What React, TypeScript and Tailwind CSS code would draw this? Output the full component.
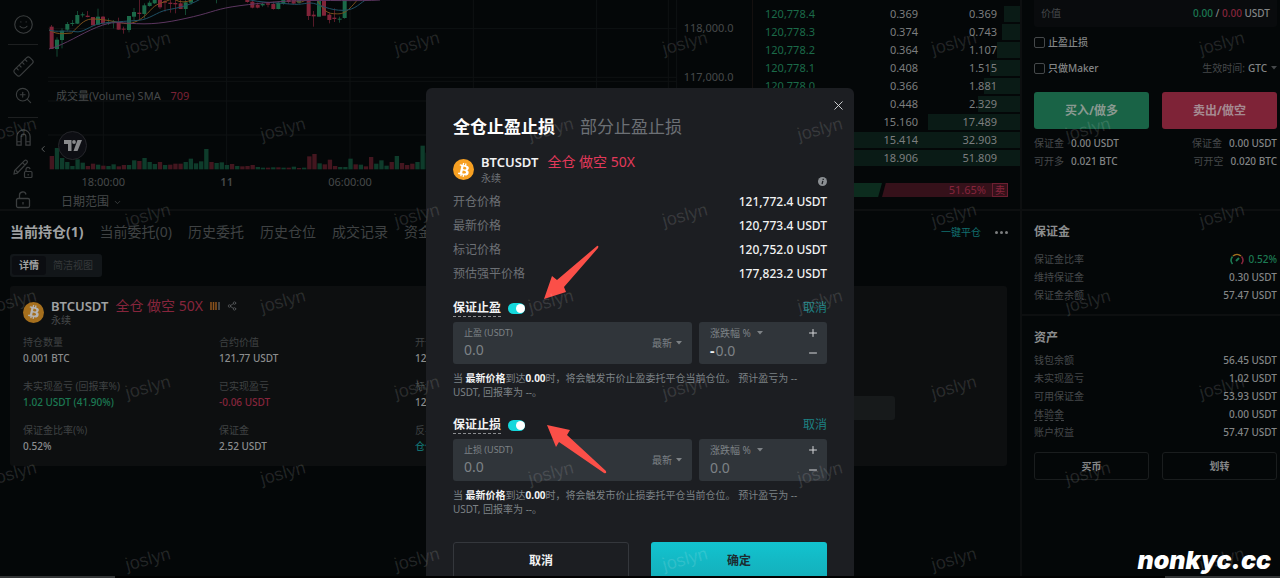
import * as React from "react"
import { ChevronDown, ChevronLeft, Minus, Plus, Ruler, Share2, Smile, X, ZoomIn } from "lucide-react"
import { FaBtc } from "react-icons/fa"

// chart units are thirds of a pixel: [x, open/close top, bottom, high, low, up]
const candles: [number, number, number, number, number, number][] = [
  [155, 80, 147, 75, 147, 0], [171, 119, 147, 112, 170, 1], [186, 92, 120, 85, 145, 1], [202, 72, 89, 66, 92, 1],
  [217, 69, 72, 60, 78, 1], [232, 45, 71, 33, 72, 1], [248, 43, 46, 37, 52, 1], [263, 47, 51, 33, 52, 0],
  [279, 51, 76, 51, 76, 0], [294, 50, 74, 26, 74, 1], [309, 50, 70, 48, 75, 0], [325, 66, 70, 55, 75, 1],
  [341, 64, 67, 60, 85, 1], [356, 66, 89, 53, 89, 0], [371, 86, 89, 80, 101, 0], [387, 48, 90, 48, 97, 1],
  [402, 36, 50, 24, 65, 1], [418, 38, 42, 0, 58, 0], [433, 16, 42, 10, 55, 1], [449, 8, 18, 2, 20, 1],
  [464, -10, 10, -10, 12, 1], [480, -4, 22, -5, 27, 0], [495, 4, 8, 0, 35, 0], [511, 8, 12, 0, 38, 0],
  [526, 9, 13, 0, 40, 0], [542, 10, 27, 0, 27, 0], [557, 7, 27, 0, 45, 1], [573, -10, 8, -10, 14, 1],
  [650, -10, 0, -10, 10, 1], [742, -5, 6, -5, 8, 0], [757, 5, 23, 0, 25, 0], [773, 14, 23, 8, 25, 0],
  [788, 12, 16, 8, 20, 1], [804, 10, 14, 5, 22, 0], [820, 12, 27, 5, 29, 0], [835, 8, 27, 5, 28, 1],
  [850, 0, 10, -5, 14, 1], [866, -3, 6, -5, 12, 0], [881, 0, 11, -5, 12, 0], [897, -3, 8, -5, 12, 1],
  [926, -5, 48, -5, 60, 0], [941, 44, 49, 33, 80, 0], [957, -5, 50, -5, 50, 1], [972, -5, 47, -5, 47, 0],
  [988, 44, 60, 40, 70, 0], [1003, 53, 57, 25, 66, 0], [1019, 56, 59, 50, 68, 1], [1034, -5, 54, -5, 56, 1],
]

// positive = up bar, negative = down bar
const volumes = [
  -40, 64, 34, 22, 10, 30, 20, -10, -17, 14, -11, 10, 15, -9, -13, 13, 27, -25, 34, 22, 16, -22, 13, -14, -17, -17,
  22, 32, 18, 24, 61, -22, 19, 21, 13, -16, 10, -9, -10, -13, 7, 5, -5, 6, -6, 5, -5, 8, -4, 5, -39, -46, 18, -15,
  -29, -10, 7, 7, 32, -15, 14, -9, -37, 17, 27, 11, -22, 40, -19, -13, -17, 22, 71, 50,
]

const book = [
  { price: "120,778.4", amount: "0.369", total: "0.369", depth: 16 },
  { price: "120,778.3", amount: "0.374", total: "0.743", depth: 18 },
  { price: "120,778.2", amount: "0.364", total: "1.107", depth: 23 },
  { price: "120,778.1", amount: "0.408", total: "1.515", depth: 30 },
  { price: "120,778.0", amount: "0.366", total: "1.881", depth: 36 },
  { price: "120,777.9", amount: "0.448", total: "2.329", depth: 42 },
  { price: "120,777.8", amount: "15.160", total: "17.489", depth: 92 },
  { price: "120,777.7", amount: "15.414", total: "32.903", depth: 268 },
  { price: "120,777.6", amount: "18.906", total: "51.809", depth: 268 },
]

const position = [
  { label: "持仓数量", value: "0.001 BTC", color: "text-[#8b8d8e]" },
  { label: "合约价值", value: "121.77 USDT", color: "text-[#8b8d8e]" },
  { label: "开仓价格", value: "121,772.4 USDT", color: "text-[#8b8d8e]" },
  { label: "未实现盈亏 (回报率%)", value: "1.02 USDT (41.90%)", color: "text-[#1c7a53]" },
  { label: "已实现盈亏", value: "-0.06 USDT", color: "text-[#86253c]" },
  { label: "标记价格", value: "120,752.0 USDT", color: "text-[#8b8d8e]" },
  { label: "保证金比率(%)", value: "0.52%", color: "text-[#8b8d8e]" },
  { label: "保证金", value: "2.52 USDT", color: "text-[#8b8d8e]" },
  { label: "反手", value: "仓位反手", color: "text-[#12706f]" },
]

const prices = [
  { label: "开仓价格", value: "121,772.4 USDT" },
  { label: "最新价格", value: "120,773.4 USDT" },
  { label: "标记价格", value: "120,752.0 USDT" },
  { label: "预估强平价格", value: "177,823.2 USDT" },
]

function Caret({ className = "" }: { className?: string }) {
  return (
    <svg viewBox="0 0 6 4" className={`pointer-events-none h-1 w-1.5 fill-current ${className}`}>
      <path d="M0 0h6L3 3.6z" />
    </svg>
  )
}

function Coin({ className = "" }: { className?: string }) {
  return (
    <span className={`flex h-[21px] w-[21px] shrink-0 items-center justify-center rounded-full ${className}`}>
      <FaBtc className="h-3.5 w-3.5 rotate-12" />
    </span>
  )
}

function Toolbar() {
  const button = "flex h-5 items-center justify-center"
  return (
    <div className="relative flex w-[46px] shrink-0 flex-col items-stretch pt-3.5 text-[#3b3e3f]">
      <button aria-label="emoji" className={button}><Smile size={21} strokeWidth={1.3} /></button>
      <hr className="mx-2 mt-[10px] border-[#1d1f20]" />
      <button aria-label="ruler" className={`${button} mt-[11px]`}><Ruler size={23} strokeWidth={1.2} className="-scale-x-100" /></button>
      <button aria-label="zoom" className={`${button} mt-2.5`}><ZoomIn size={19} strokeWidth={1.4} /></button>
      <hr className="mx-2 mt-3 border-[#1d1f20]" />
      <button aria-label="magnet" className={`${button} mt-2.5`}>
        <svg viewBox="0 0 18 20" className="h-[19px] w-[17px]" fill="none" stroke="currentColor" strokeWidth="1.3">
          <path d="M2 18V9a7 7 0 0 1 14 0v9h-4.5V9a2.5 2.5 0 0 0-5 0v9zM2 14.5h4.5M11.5 14.5H16" />
        </svg>
      </button>
      <button aria-label="lock drawings" className={`${button} mt-3`}>
        <svg viewBox="0 0 20 20" className="h-5 w-5" fill="none" stroke="currentColor" strokeWidth="1.2">
          <path d="M1 15l.6-3.4L11.5 1.6a1.7 1.7 0 0 1 2.4 2.4L4.2 14.2zM9.5 3.6l2.5 2.5M3 11.5l1.5 1.5" />
          <rect x="11.5" y="12.5" width="7.5" height="6" rx="1" />
          <path d="M13 12.5v-2a2 2 0 0 1 4-.4M15.2 15v1.5" />
        </svg>
      </button>
      <button aria-label="lock" className={`${button} mt-3`}>
        <svg viewBox="0 0 16 18" className="h-[18px] w-4" fill="none" stroke="currentColor" strokeWidth="1.3">
          <rect x="1.5" y="7.5" width="13" height="9" rx="1.5" />
          <path d="M4.5 7.5V4.5a3.3 3.3 0 0 1 6.5-1M8 11v2.5" />
        </svg>
      </button>
      <button aria-label="collapse" className="absolute -right-0.5 top-36 text-[#6b6d6e]"><ChevronLeft size={10} /></button>
    </div>
  )
}

function Chart() {
  return (
    <div className="relative min-w-0 flex-1 overflow-hidden pl-0.5">
      <svg viewBox="144 0 2115 570" className="h-[190px] w-[705px] max-w-none">
        <g stroke="#0f1213" strokeWidth="3">
          {[86, 232, 244, 303, 405].map((y) => <path key={y} d={`M144 ${y}H2030`} />)}
          {[310, 680, 1050, 1420, 1790, 2005, 2030].map((x) => <path key={x} d={`M${x} 0V508`} />)}
        </g>
        {candles.map(([x, top, bottom, high, low, up]) => (
          <g key={x} fill={up ? "#1b6a49" : "#802439"}>
            <rect x={x - 6} y={top} width="12" height={bottom - top} />
            <rect x={x - 1} y={high} width="2" height={low - high} />
          </g>
        ))}
        {volumes.map((v, i) => (
          <rect
            key={i}
            x={149 + i * 15.45}
            y={508 - Math.abs(v)}
            width="13"
            height={Math.abs(v)}
            fill={v > 0 ? "#0e3c2b" : "#44161f"}
          />
        ))}
        <g fill="none" strokeWidth="3">
          <path stroke="#7a4f1c" d="M147 90C160 98 175 102 190 101L215 99C235 80 250 58 275 57S340 64 370 70S430 55 450 32S480 12 512 -2M525 -1Q548 12 575 0M885 0C895 10 905 8 920 -2M950 -2C965 20 975 40 1000 41S1035 46 1075 -4" />
          <path stroke="#1f5064" d="M147 90C170 98 200 90 225 95S270 76 300 71S380 64 415 61S470 36 500 30S560 20 600 -2M740 -2C780 8 830 8 870 12S920 6 940 10S990 32 1030 31S1080 6 1102 -2" />
          <path stroke="#5c3660" d="M147 147C200 132 240 102 290 82S350 68 410 71S520 64 580 50S650 26 720 17S830 4 900 2S1080 4 1140 0" />
        </g>
        <g fill="#46494a" fontSize="33" fontFamily="Noto Sans, sans-serif">
          <text x="2051" y="95">118,000.0</text>
          <text x="2051" y="243">117,000.0</text>
          <g textAnchor="middle">
            <text x="310" y="558">18:00:00</text>
            <text x="680" y="558" fontWeight="600">11</text>
            <text x="1050" y="558">06:00:00</text>
          </g>
        </g>
      </svg>
      <p className="absolute left-2.5 top-[88px] text-[11px] leading-4 text-[#46494a]">
        成交量(Volume) SMA <span className="ml-[7px] text-[#7a2236]">709</span>
      </p>
      <span className="absolute left-3 top-[131px] flex h-[29px] w-[29px] items-center justify-center rounded-full border border-[#25262a] bg-[#0d0e13]">
        <svg viewBox="0 0 18 11" className="h-[11px] w-[18px] fill-[#88898b]">
          <path d="M0 0h7.5v11H4V4H0z" />
          <circle cx="10" cy="2" r="1.9" />
          <path d="M13.5 0H18l-4.5 11H9.5z" />
        </svg>
      </span>
      <button className="ml-[13px] mt-0.5 flex h-5 items-center gap-1 text-xs text-[#46494a]">
        日期范围 <ChevronDown size={9} />
      </button>
    </div>
  )
}

function OrderBook() {
  return (
    <div className="flex w-[268px] shrink-0 flex-col border-l border-[#14100f] pt-[5px]">
      {book.map((row) => (
        <div key={row.price} className="relative flex h-[18px] items-center pl-3 pr-[23px] text-[11px]">
          <span className="absolute bottom-px right-0 top-px bg-[#0a1b16]" style={{ width: row.depth }} />
          <span className="relative w-[70px] text-[#1b6a49]">{row.price}</span>
          <span className="relative flex-1 text-right text-[#7c7e7f]">{row.amount}</span>
          <span className="relative w-[79px] text-right text-[#7c7e7f]">{row.total}</span>
        </div>
      ))}
      <div className="mr-3 mt-4 flex h-3.5 text-[11px] leading-[14px]">
        <span className="flex-1 bg-[#0c2c1e] [clip-path:polygon(0_0,100%_0,97%_100%,0_100%)]" />
        <span className="flex w-[126px] items-center justify-end gap-1.5 bg-[#35111a] text-[#86253c] [clip-path:polygon(3%_0,100%_0,100%_100%,0_100%)]">
          51.65%
          <span className="flex h-3.5 w-4 items-center justify-center border border-[#6d1f31] text-[10px]">卖</span>
        </span>
      </div>
    </div>
  )
}

function Positions() {
  return (
    <section className="px-2.5 pt-[9px]">
      <div className="flex items-center pr-0.5">
        <nav className="flex flex-1 gap-4 whitespace-nowrap text-sm leading-6 text-[#3f4243]">
          <button className="font-bold text-[#a0a2a3]">当前持仓(1)</button>
          <button>当前委托(0)</button>
          <button>历史委托</button>
          <button>历史仓位</button>
          <button>成交记录</button>
          <button>资金流水</button>
        </nav>
        <button className="mr-3.5 text-[10px] text-[#12706f]">一键平仓</button>
        <button aria-label="more" className="flex gap-0.5">
          <i className="h-[3px] w-[3px] rounded-full bg-[#7c7e7f]" />
          <i className="h-[3px] w-[3px] rounded-full bg-[#7c7e7f]" />
          <i className="h-[3px] w-[3px] rounded-full bg-[#7c7e7f]" />
        </button>
      </div>
      <div className="mt-2.5 flex w-[92px] items-center rounded-[3px] bg-[#121619] p-0.5 text-[10px] leading-[19px]">
        <button className="w-[34px] rounded-[3px] bg-[#0b0d11] font-bold text-[#a0a2a3]">详情</button>
        <button className="flex-1 text-[#35383a]">简洁视图</button>
      </div>
      <div className="mr-[3px] mt-[9px] rounded-[3px] bg-[#0d0f10] pb-3 pl-[13px] pr-1 pt-3">
        <div className="flex items-center gap-[7px]">
          <Coin className="bg-[#a56f1d] text-[#b5b5b5]" />
          <div>
            <p className="flex items-center gap-[7px] text-[13px] leading-4">
              <b className="font-semibold text-[#a0a2a3]">BTCUSDT</b>
              <span className="text-sm leading-4 text-[#86253c]">全仓 做空 50X</span>
              <svg viewBox="0 0 10 8" className="h-2 w-2.5">
                <path d="M1 0v8M3.5 0v8M6 0v8" stroke="#8f541c" strokeWidth="1.5" />
                <path d="M9 0v8" stroke="#55585a" strokeWidth="1.5" />
              </svg>
              <Share2 size={10} className="text-[#55585a]" />
            </p>
            <p className="text-[10px] leading-3 text-[#46494a]">永续</p>
          </div>
        </div>
        <div className="relative mt-2 grid grid-cols-5 gap-y-3 text-[10px] leading-4">
          {position.map((item, i) => (
            <div key={item.label} className={i % 3 === 2 ? "col-span-3" : ""}>
              <p className="text-[#3f4243]">{item.label}</p>
              <p className={`font-medium ${item.color}`}>{item.value}</p>
            </div>
          ))}
          <button aria-label="close position" className="absolute left-[80%] top-[62px] h-6 w-[88px] rounded-[3px] bg-[#171a1b]" />
        </div>
      </div>
    </section>
  )
}

function Row({ label, value, dashed }: { label: string; value: React.ReactNode; dashed?: boolean }) {
  return (
    <div className="flex h-[18px] items-center justify-between">
      <span className={dashed ? "border-b border-dashed border-[#45484a] leading-3 text-[#45484a]" : "text-[#45484a]"}>{label}</span>
      <span className="font-medium text-[#838586]">{value}</span>
    </div>
  )
}

function Sidebar() {
  const box = "h-[11px] w-[11px] appearance-none rounded-[2px] border border-[#45484a]"
  return (
    <aside className="w-[260px] shrink-0 border-l-2 border-[#0d0f10] text-[10px]">
      <section className="h-[211px] border-b-2 border-[#0d0f10] pl-3 pr-[3px]">
        <div className="flex h-[27px] items-center justify-between rounded-b-[3px] bg-[#090b0d] px-[7px]">
          <span className="text-[#45484a]">价值</span>
          <span className="font-medium text-[#838586]">
            <span className="text-[#1c7a53]">0.00</span> / <span className="text-[#86253c]">0.00</span> USDT
          </span>
        </div>
        <label className="mt-[7px] flex h-4 items-center gap-[3px] font-medium text-[#838586]">
          <input type="checkbox" className={box} />
          止盈止损
        </label>
        <div className="mt-2.5 flex h-4 items-center justify-between">
          <label className="flex items-center gap-[3px] font-medium text-[#838586]">
            <input type="checkbox" className={box} />
            只做Maker
          </label>
          <label className="flex items-center gap-[3px] text-[#45484a]">
            生效时间:
            <select className="appearance-none font-medium text-[#838586]">
              <option>GTC</option>
            </select>
            <Caret />
          </label>
        </div>
        <div className="mt-4 grid grid-cols-2 gap-[13px] text-xs font-bold">
          <button className="h-[37px] rounded-[3px] bg-[#196346] text-[#8a9991]">买入/做多</button>
          <button className="h-[37px] rounded-[3px] bg-[#7e2337] text-[#a58a91]">卖出/做空</button>
        </div>
        <div className="mt-[5px] flex justify-between font-medium leading-[18px] text-[#838586]">
          <div>
            <p><span className="mr-[7px] font-normal text-[#45484a]">保证金</span>0.00 USDT</p>
            <p><span className="mr-[7px] font-normal text-[#45484a]">可开多</span>0.021 BTC</p>
          </div>
          <div className="text-right">
            <p><span className="mr-[7px] font-normal text-[#45484a]">保证金</span>0.00 USDT</p>
            <p><span className="mr-[7px] font-normal text-[#45484a]">可开空</span>0.020 BTC</p>
          </div>
        </div>
      </section>
      <section className="h-[105px] border-b-2 border-[#0d0f10] pl-3 pr-[3px] pt-[11px]">
        <h2 className="mb-2 text-xs font-bold leading-5 text-[#8b8d8e]">保证金</h2>
        <Row
          label="保证金比率"
          value={
            <span className="flex items-center gap-[5px] text-[#1c7a53]">
              <svg viewBox="0 0 14 12" className="h-3 w-3.5" fill="none" strokeWidth="1.6">
                <path d="M2.5 11A6 6 0 0 1 2.5 3.5" stroke="#1c7a53" />
                <path d="M3 3A6 6 0 0 1 11 3" stroke="#a0701e" />
                <path d="M11.5 3.5A6 6 0 0 1 11.5 11" stroke="#86253c" />
                <path d="M6 8l3-3" stroke="#1c7a53" strokeWidth="2" />
              </svg>
              0.52%
            </span>
          }
        />
        <Row label="维持保证金" value="0.30 USDT" />
        <Row label="保证金余额" value="57.47 USDT" />
      </section>
      <section className="pl-3 pr-[3px] pt-3">
        <h2 className="mb-[3px] text-xs font-bold leading-5 text-[#8b8d8e]">资产</h2>
        <Row label="钱包余额" value="56.45 USDT" />
        <Row label="未实现盈亏" value="1.02 USDT" />
        <Row label="可用保证金" value="53.93 USDT" />
        <Row label="体验金" value="0.00 USDT" dashed />
        <Row label="账户权益" value="57.47 USDT" />
        <div className="mt-[11px] grid grid-cols-2 gap-[13px] font-bold text-[#838586]">
          <button className="h-7 rounded-[3px] border border-[#1a1d1e]">买币</button>
          <button className="h-7 rounded-[3px] border border-[#1a1d1e]">划转</button>
        </div>
      </section>
    </aside>
  )
}

function TriggerForm({ name, sign }: { name: string; sign?: string }) {
  return (
    <div>
      <div className="flex h-5 items-center">
        <label className="flex items-center gap-[7px] text-xs font-bold text-[#f1f2f3]">
          <span className="border-b border-dashed border-[#8b8d90] leading-4">保证{name}</span>
          <input
            type="checkbox"
            defaultChecked
            className="relative h-[11px] w-[17px] appearance-none rounded-full bg-[#15d8dc] before:absolute before:right-0 before:top-px before:h-[9px] before:w-[9px] before:rounded-full before:bg-white"
          />
        </label>
        <button className="ml-auto text-xs text-[#1c8182]">取消</button>
      </div>
      <div className="mt-1 flex gap-[7px] text-[#7d8286]">
        <div className="flex h-[42px] min-w-0 flex-1 items-center rounded-[3px] bg-[#30353a] pl-[11px] pr-2.5">
          <label className="min-w-0 flex-1 text-[9px] leading-[14px]">
            {name} (USDT)
            <input placeholder="0.0" className="block h-5 w-full text-sm outline-none placeholder:text-[#7d8286]" />
          </label>
          <select aria-label="price type" className="mr-1 appearance-none text-[10px]">
            <option>最新</option>
          </select>
          <Caret />
        </div>
        <div className="flex h-[42px] w-32 items-center rounded-[3px] bg-[#30353a] pl-[11px] pr-2">
          <div className="min-w-0 flex-1">
            <div className="flex items-center gap-1.5 text-[10px] leading-4">
              <select aria-label="mode" className="appearance-none">
                <option>涨跌幅 %</option>
              </select>
              <Caret />
            </div>
            <div className="flex items-center gap-px text-sm">
              {sign && <span className="font-bold text-[#f1f2f3]">{sign}</span>}
              <input aria-label="percent" placeholder="0.0" className="h-5 w-full min-w-0 outline-none placeholder:text-[#7d8286]" />
            </div>
          </div>
          <div className="flex flex-col gap-2 text-[#d5d7d9]">
            <button aria-label="increase"><Plus size={12} /></button>
            <button aria-label="decrease"><Minus size={12} /></button>
          </div>
        </div>
      </div>
      <p className="mt-[7px] text-[10px] leading-[14px] text-[#7d8286]">
        当 <b className="text-[#f1f2f3]">最新价格</b>到达<b className="text-[#f1f2f3]">0.00</b>时，将会触发市价{name}委托平仓当前仓位。 预计盈亏为 -- USDT, 回报率为 --。
      </p>
    </div>
  )
}

function StopModal() {
  return (
    <div className="absolute inset-x-0 bottom-0.5 top-0 flex justify-center overflow-hidden pt-[88px]">
      <div role="dialog" className="relative h-[506px] w-[428px] rounded-t-md bg-[#1c1e22] px-[27px] pt-[27px]">
        <button aria-label="close" className="absolute right-2 top-2.5 text-[#d5d7d9]"><X size={15} strokeWidth={1.5} /></button>
        <div className="flex gap-[25px] text-[17px] leading-6 text-[#6c7075]">
          <button className="font-bold text-white">全仓止盈止损</button>
          <button>部分止盈止损</button>
        </div>
        <div className="mt-3.5 flex items-center gap-[7px]">
          <Coin className="bg-[#f7a022] text-white" />
          <div className="flex-1">
            <p className="flex gap-[9px] text-[13px] leading-[18px]">
              <b className="font-semibold text-[#f1f2f3]">BTCUSDT</b>
              <span className="text-sm leading-[18px] text-[#e2395a]">全仓 做空 50X</span>
            </p>
            <p className="text-[10px] leading-[15px] text-[#6c7075]">永续</p>
          </div>
          <svg viewBox="0 0 10 10" className="mt-6 h-[9px] w-[9px]">
            <circle cx="5" cy="5" r="5" fill="#8b8f93" />
            <path d="M5.8 2v1.3M5.4 4.2L4.5 8" stroke="#1c1e22" strokeWidth="1.4" />
          </svg>
        </div>
        <div className="mt-1 text-xs leading-6">
          {prices.map((item) => (
            <p key={item.label} className="flex justify-between">
              <span className="text-[#6c7075]">{item.label}</span>
              <span className="font-medium text-[#f1f2f3]">{item.value}</span>
            </p>
          ))}
        </div>
        <div className="mt-3 flex flex-col gap-4">
          <TriggerForm name="止盈" sign="-" />
          <TriggerForm name="止损" />
        </div>
        <div className="mt-[26px] grid grid-cols-2 gap-[22px] text-xs font-bold">
          <button className="h-[38px] rounded-[3px] border border-[#34373c] text-[#f1f2f3]">取消</button>
          <button className="h-[38px] rounded-[3px] bg-linear-to-b from-[#12c3cf] to-[#14aeba] text-[#1c2c30]">确定</button>
        </div>
        <svg viewBox="0 0 64 230" className="absolute left-[117px] top-[157px] h-[230px] w-16 fill-[#fb4f48]">
          <path d="M1 54L9 31L14 35L54 1Q56 0 55 3L21 42L23 47z" />
          <path d="M4 180L27 185L24 190L63 226Q64 229 61 228L16 197L13 202z" />
        </svg>
      </div>
    </div>
  )
}

function Watermarks() {
  const rows = [43, 129, 215, 301, 387, 473, 559]
  return (
    <div aria-hidden="true" className="pointer-events-none absolute inset-0 select-none overflow-hidden">
      {rows.map((y, r) =>
        [0, 1, 2, 3, 4].map((c) => (
          <span
            key={`${r}-${c}`}
            className="absolute -translate-x-1/2 -translate-y-1/2 -rotate-15 font-['Liberation_Sans',sans-serif] text-lg text-white/12"
            style={{ left: (r % 2 ? 14 : 148) + c * 268.6, top: y }}
          >
            joslyn
          </span>
        ))
      )}
    </div>
  )
}

export default function App() {
  return (
    <div className="relative flex h-screen flex-col overflow-hidden bg-[#040708] font-['Noto_Sans','Noto_Sans_CJK_SC',sans-serif]">
      <div className="flex min-h-0 flex-1">
        <main className="min-w-0 flex-1 overflow-hidden">
          <div className="flex h-[211px] border-b-2 border-[#0d0f10]">
            <Toolbar />
            <Chart />
            <OrderBook />
          </div>
          <Positions />
        </main>
        <Sidebar />
      </div>
      <div className="flex h-0.5 justify-between bg-black">
        <span className="w-[9%] bg-[#333536]" />
        <span className="w-[9%] bg-[#333536]" />
      </div>
      <StopModal />
      <Watermarks />
      <p className="absolute bottom-0.5 right-[9px] font-['Inter',sans-serif] text-[25px] font-black italic leading-8 text-white">nonkyc.cc</p>
    </div>
  )
}
